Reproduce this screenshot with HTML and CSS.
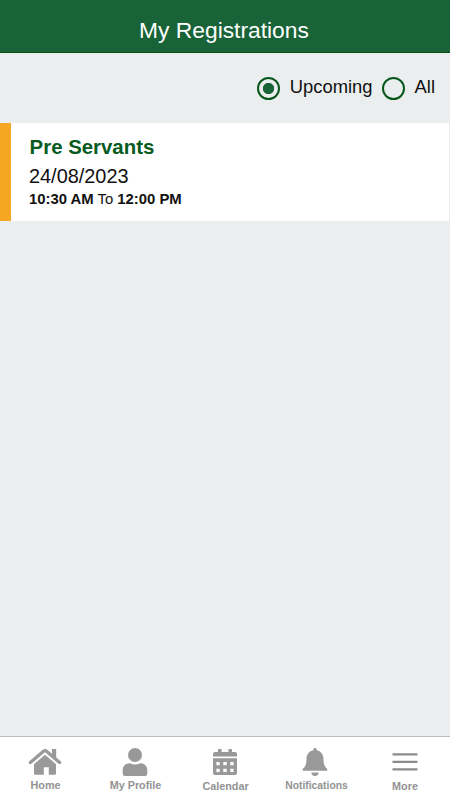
FILE: index.html
```html
<!DOCTYPE html>
<html lang="en">
<head>
<meta charset="utf-8">
<title>My Registrations</title>
<link rel="stylesheet" href="styles.css">
</head>
<body>
<header class="header"><h1>My Registrations</h1></header>
<main>
  <div class="filters">
    <span class="radio checked"></span><span class="option">Upcoming</span>
    <span class="radio"></span><span class="option">All</span>
  </div>
  <article class="card">
    <h2>Pre Servants</h2>
    <div class="date">24/08/2023</div>
    <div class="time"><b>10:30 AM</b> To <b>12:00 PM</b></div>
  </article>
</main>
<nav class="nav">
  <a class="item home">
    <svg width="34" height="28" viewBox="0 0 34 28"><path d="M2.4 14.4 15.5 3.3Q17 2.1 18.5 3.3L31.6 14.4" fill="none" stroke="#999" stroke-width="3.3" stroke-linecap="round" stroke-linejoin="round"/><path d="M24 1h4.2v11L24 8.4zM17 6.8 28 16.2V25.5q0 1.3-1.3 1.3H20.8v-7.6h-5v7.6H7.3q-1.3 0-1.3-1.3V16.2z"/></svg>
    <span>Home</span>
  </a>
  <a class="item profile">
    <svg width="26" height="28" viewBox="0 0 26 28"><circle cx="13" cy="7" r="7"/><path d="M7.8 15.2Q13 18 18.2 15.2C22.5 15.2 25.3 18 25.3 22v3.2q0 2.8-2.8 2.8h-19Q.7 28 .7 25.2V22c0-4 2.8-6.8 7.1-6.8z"/></svg>
    <span>My Profile</span>
  </a>
  <a class="item calendar">
    <svg width="24" height="28" viewBox="0 0 24 28"><path fill-rule="evenodd" d="M0 8.4V6q0-2 2-2h3V1.7Q5 1 5.7 1h2.2q.7 0 .7.7V4h6.8V1.7q0-.7.7-.7h2.2q.7 0 .7.7V4h3q2 0 2 2v2.4zM0 10.2h24V25q0 2-2 2H2q-2 0-2-2zM3.4 14v3.3h3.3V14zm6.9 0v3.3h3.4V14zm7 0v3.3h3.3V14zM3.4 20.8v3.3h3.3v-3.3zm6.9 0v3.3h3.4v-3.3zm7 0v3.3h3.3v-3.3z"/></svg>
    <span>Calendar</span>
  </a>
  <a class="item notifications">
    <svg width="26" height="28" viewBox="0 0 26 28"><path d="M11.4 2V1.5a1.6 1.6 0 0 1 3.2 0V2.3C19 3 21.5 6.5 21.5 11c0 5.6 1.2 7.4 3.2 9.3 1.3 1.3.6 2.5-.8 2.5H2.1C.7 22.8 0 21.6 1.3 20.3c2-1.9 3.2-3.7 3.2-9.3 0-4.5 2.5-8 6.9-8.7zM9.4 24.5h7.2a3.6 3.5 0 0 1-7.2 0z"/></svg>
    <span>Notifications</span>
  </a>
  <a class="item more">
    <svg width="26" height="28" viewBox="0 0 26 28"><path d="M.5 5.3h25v2.3H.5zM.5 12.8h25v2.3H.5zM.5 20.2h25v2.3H.5z"/></svg>
    <span>More</span>
  </a>
</nav>
</body>
</html>
```
FILE: styles.css
```css
* { box-sizing: border-box; }
body {
  margin: 0;
  height: 800px;
  display: flex;
  flex-direction: column;
  background: #eaeeef;
  color: #111;
  font-family: "Liberation Sans", Arial, sans-serif;
}
.header {
  height: 53px;
  padding-top: 17px;
  background: #186337;
  border-bottom: 1px solid #07520f;
  text-align: center;
}
h1 {
  margin: 0;
  padding-right: 2px;
  color: #fff;
  font-size: 22.8px;
  font-weight: 400;
  line-height: 26px;
}
main { flex: 1; }
.filters {
  height: 70px;
  display: flex;
  justify-content: flex-end;
  align-items: center;
  padding-right: 15px;
}
.radio {
  width: 23px;
  height: 23px;
  border: 2px solid #07571a;
  border-radius: 50%;
  margin: 0 10px 0 9px;
}
.checked { background: radial-gradient(circle, #186337 5.3px, transparent 6px); }
.option { margin-top: -2px; font-size: 18.4px; line-height: 22px; }
.card {
  height: 98px;
  margin-right: 1px;
  padding: 12px 0 0 18px;
  border-left: 11px solid #f6a623;
  background: #fff;
}
h2 {
  margin: 0;
  padding-left: .6px;
  color: #075b1e;
  font-size: 20.4px;
  line-height: 24px;
}
.date { margin-top: 5px; font-size: 19.9px; line-height: 24px; }
.time { margin-top: 1px; font-size: 14.85px; line-height: 20px; }
.nav {
  height: 64px;
  display: grid;
  grid-template-columns: repeat(5, 1fr);
  padding-top: 11px;
  background: #fff;
  border-top: 1px solid #bbb;
}
.item {
  display: flex;
  flex-direction: column;
  align-items: center;
  color: #929292;
  font-size: 10.8px;
  font-weight: 700;
  line-height: 14px;
}
.item svg { fill: #999; }
.item span { margin-top: 2px; padding-left: 1px; white-space: nowrap; }
.item.calendar span { margin-top: 3px; }
.item.more span { margin-top: 3px; padding-left: 0; }
.item.notifications span { margin-top: 3px; padding-left: 3px; }
.notifications { font-size: 10.35px; }
.more svg { fill: #8c8c8c; }
```
